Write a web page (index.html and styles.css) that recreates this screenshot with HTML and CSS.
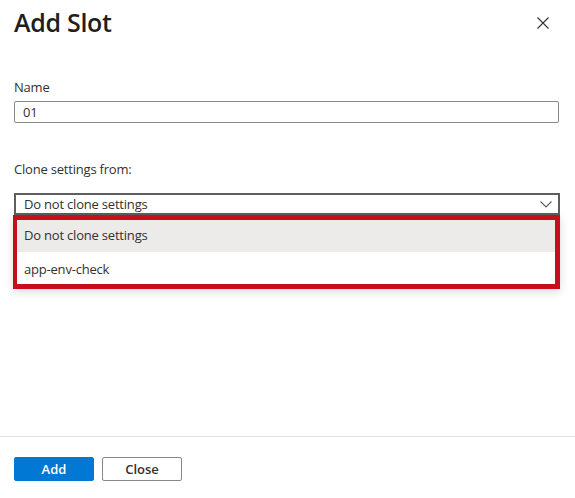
FILE: index.html
```html
<!DOCTYPE html>
<html lang="en">
<head>
<meta charset="utf-8">
<title>Add Slot</title>
<link rel="stylesheet" href="styles.css">
</head>
<body>
<div class="panel">
  <div class="header">
    <h1 class="title">Add Slot</h1>
    <button class="close-x" aria-label="Close">
      <svg width="12" height="12" viewBox="0 0 12 12"><path d="M0.5 0.5 L11.5 11.5 M11.5 0.5 L0.5 11.5" stroke="#323130" stroke-width="1.1" fill="none"/></svg>
    </button>
  </div>
  <div class="content">
    <div class="field">
      <label class="label">Name</label>
      <div class="input">01</div>
    </div>
    <div class="field field-clone">
      <label class="label label-clone">Clone settings from:</label>
      <div class="select">
        <span>Do not clone settings</span>
        <svg class="chev" width="12" height="7" viewBox="0 0 12 7"><path d="M0.5 0.5 L6 6 L11.5 0.5" stroke="#605e5c" stroke-width="1.1" fill="none"/></svg>
      </div>
      <div class="dropdown">
        <div class="option selected">Do not clone settings</div>
        <div class="option second">app-env-check</div>
      </div>
    </div>
  </div>
  <div class="footer">
    <button class="btn primary">Add</button>
    <button class="btn secondary">Close</button>
  </div>
</div>
</body>
</html>
```
FILE: styles.css
```css
* { box-sizing: border-box; }
html, body { margin: 0; padding: 0; background: #fff; }
body {
  font-family: "Open Sans", "Noto Sans", sans-serif;
  font-size: 13px;
  color: #323130;
  letter-spacing: -0.2px;
}
.panel {
  width: 575px;
  height: 498px;
  display: flex;
  flex-direction: column;
}
.header {
  display: flex;
  justify-content: space-between;
  align-items: flex-start;
  padding: 6px 26px 0 14px;
}
.title {
  margin: 0;
  font-size: 25px;
  line-height: 32px;
  font-weight: 550;
  color: #201f1e;
  letter-spacing: -0.3px;
}
.close-x {
  border: 0;
  background: none;
  padding: 0;
  margin-top: 11px;
  width: 12px;
  height: 12px;
  display: flex;
}
.content {
  flex: 1;
  padding: 40px 16px 0 14px;
}
.field { display: flex; flex-direction: column; }
.label {
  line-height: 18px;
  margin-bottom: 5px;
}
.input {
  height: 22px;
  border: 1px solid #8a8886;
  border-radius: 2px;
  padding: 0 8px;
  line-height: 20px;
}
.field-clone { margin-top: 37px; }
.label-clone { margin-bottom: 15px; }
.select {
  height: 22px;
  border: 2px solid #605e5c;
  padding: 0 6px 0 8px;
  line-height: 18px;
  display: flex;
  justify-content: space-between;
  align-items: center;
  margin-right: -1px;
}
.dropdown {
  margin-left: -1px;
  margin-right: -1px;
  border-style: solid;
  border-color: #c50f1f;
  border-width: 5px 5px 5px 4px;
  box-shadow: 0 3px 9px rgba(0,0,0,0.14);
}
.option {
  height: 32px;
  line-height: 30px;
  padding: 0 7px;
}
.option.selected { background: #edebe9; }
.option.second {
  padding-top: 3px;
  line-height: 29px;
}
.footer {
  border-top: 1px solid #e1dfdd;
  padding: 20px 14px 17px;
  display: flex;
  gap: 8px;
}
.btn {
  width: 80px;
  height: 24px;
  border-radius: 2px;
  font-family: inherit;
  font-size: 13px;
  font-weight: 600;
  padding: 0;
  line-height: 22px;
  letter-spacing: 0;
}
.primary {
  background: #0078d4;
  border: 1px solid #0078d4;
  color: #fff;
}
.secondary {
  background: #fff;
  border: 1px solid #8a8886;
  color: #323130;
}
```
